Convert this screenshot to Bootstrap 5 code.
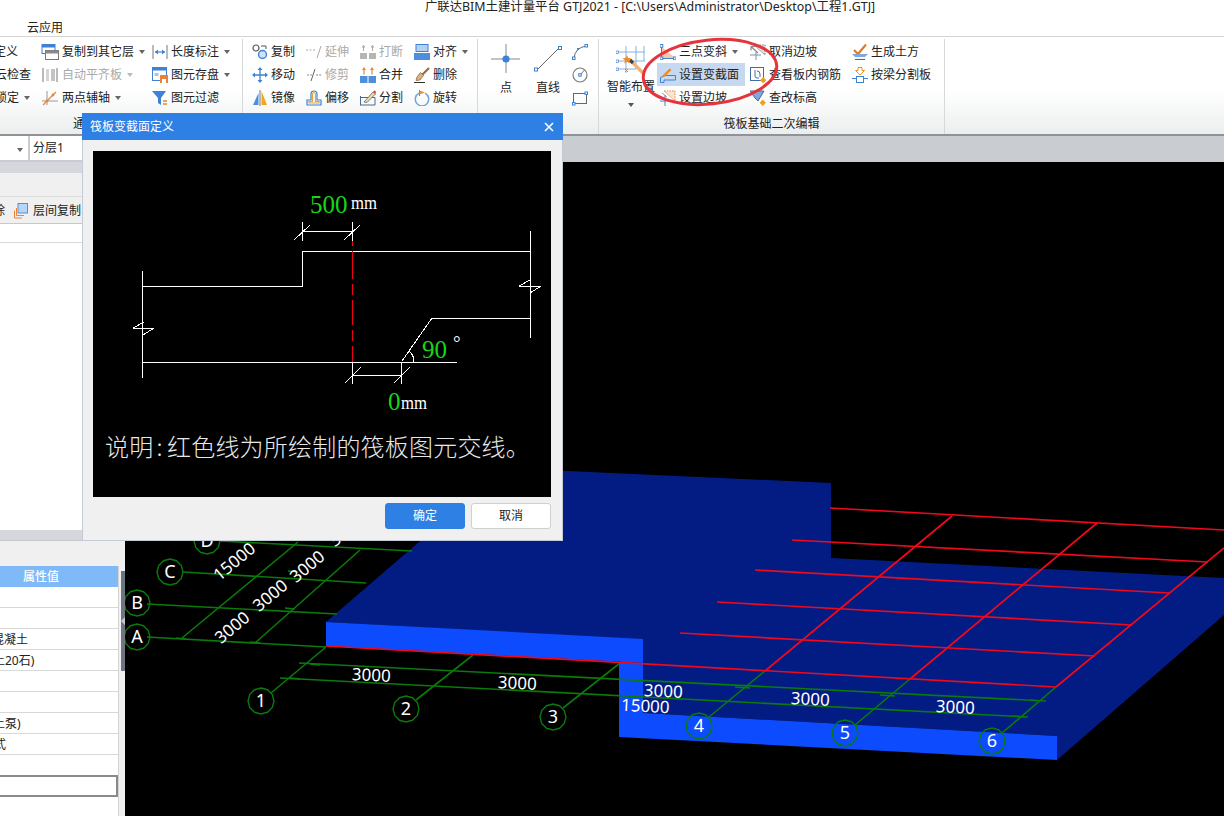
<!DOCTYPE html>
<html lang="zh-CN">
<head>
    <meta charset="UTF-8">
    <title>广联达BIM土建计量平台 GTJ2021</title>
    <link href="https://cdn.jsdelivr.net/npm/bootstrap@5.3.0/dist/css/bootstrap.min.css" rel="stylesheet">
    <style>
        html, body {
            width: 1224px;
            height: 816px;
            overflow: hidden;
        }
        body {
            position: relative;
            background: #fff;
            color: #222;
            font-family: "Noto Sans", "Noto Sans CJK SC", sans-serif;
            font-size: 12px;
        }
        .app-title {
            height: 17px;
            line-height: 13px;
            text-align: center;
            padding-left: 76px;
            font-size: 12.4px;
        }
        .app-tabs {
            height: 19px;
            padding-left: 27px;
            line-height: 22px;
        }

        /* ribbon */
        .rb {
            height: 100px;
            border-top: 1px solid #d4d4d4;
            border-bottom: 2px solid #8f9296;
            background: linear-gradient(#fff 55%, #eceeee);
        }
        .rb-group {
            flex: none;
            height: 95px;
            margin-top: 2px;
            border-right: 1px solid #d6d8da;
            padding-top: 1px;
        }
        .rb-g1 { width: 243px; }
        .rb-g2 { width: 235px; }
        .rb-g3 { width: 121px; }
        .rb-g4 { width: 346px; }
        .rb-body { height: 69px; }
        .rb-label {
            height: 27px;
            line-height: 29px;
            text-align: center;
        }
        .rb-g1 .rb-label { text-align: left; padding-left: 73px; }
        .rb-item {
            height: 23px;
            display: flex;
            align-items: center;
            white-space: nowrap;
        }
        .rb-item svg { flex: none; margin-right: 3px; }
        .rb-off { color: #a9a9a9; }
        .rb-on { background: #c6d9f0; margin-right: 5px; }
        .rb-caret {
            display: inline-block;
            margin-left: 5px;
            border-left: 3px solid transparent;
            border-right: 3px solid transparent;
            border-top: 4px solid #666;
        }
        .rb-off .rb-caret { border-top-color: #bbb; }
        .col-a { width: 41px; overflow: hidden; }
        .col-b { width: 111px; }
        .col-c { width: 90px; }
        .col-d { width: 54px; }
        .col-last { width: 63px; }
        .pad-g2 { padding-left: 9px; }
        .cut-a { margin-left: -6px; }
        .cut-b { margin-left: -5px; }
        .rb-big {
            width: 42px;
            text-align: center;
            line-height: 16px;
        }
        .rb-big svg { display: block; margin: 4px auto 6px; }
        .pad-g3 { padding-left: 7px; }
        .mini-col { padding-left: 3px; }
        .mini-col svg { margin: 0; }
        .pad-g4 { padding-left: 7px; }
        .smart { width: 50px; margin-right: 1px; }
        .smart svg { margin: 5px auto 4px; }
        .smart .rb-caret { margin: 6px 0 0; border-top-color: #555; }
        .col-e { width: 93px; }
        .col-e .rb-item { padding-left: 3px; }
        .col-f { width: 102px; }

        /* level bar */
        .level-bar {
            height: 26px;
            background: #c9ccd1;
        }
        .combo {
            height: 24px;
            background: #fff;
            line-height: 24px;
        }
        .combo-a { width: 28px; margin-right: 2px; padding: 0 4px 0 17px; }
        .combo-b { width: 60px; padding-left: 3px; }

        /* left side */
        .work { height: 654px; }
        .side {
            width: 125px;
            flex: none;
            background: #f0f0f0;
        }
        .side-head {
            height: 11px;
            background: #d5d7dc;
        }
        .side-gap { height: 24px; border-bottom: 1px solid #dcdcdc; }
        .side-tools {
            height: 27px;
            padding-top: 2px;
            border-bottom: 1px solid #c8c8c8;
            white-space: nowrap;
            overflow: hidden;
        }
        .side-tools svg { margin: 0 5px 0 9px; flex: none; }
        .cut-t { margin-left: -19px; }
        .side-list {
            height: 306px;
            background: #fff;
        }
        .side-list-row { height: 19px; border-bottom: 1px solid #d8d8d8; }
        .side-sep { height: 11px; background: #d5d7dc; border-bottom: 1px solid #c6c8cc; }
        .prop-top { height: 25px; }
        .prop-wrap { height: 250px; }
        .prop-list {
            width: 119px;
            background: #fff;
            border-right: 1px solid #d4d4d4;
        }
        .prop-head {
            height: 21px;
            line-height: 21px;
            padding-left: 23px;
            background: #7fb9f8;
            color: #fff;
            font-weight: 500;
        }
        .prop-row {
            height: 21px;
            line-height: 22px;
            border-bottom: 1px solid #d8d8d8;
            overflow: hidden;
            white-space: nowrap;
        }
        .prop-none { border-bottom: 0; height: 20px; }
        .prop-sel {
            height: 22px;
            border: 2px solid #8a8a8a;
            border-left: 0;
        }
        .cut-c { margin-left: -8px; }
        .cut-d { margin-left: -7px; }
        .cut-e { margin-left: -6px; }
        .side-grip {
            width: 6px;
            background: #f0f0f0;
            padding-left: 2px;
        }
        .grip-bar {
            width: 4px;
            height: 100px;
            margin-top: 5px;
            padding-top: 46px;
            background: #6c7580;
        }
        .grip-tip {
            display: block;
            width: 0;
            border-top: 4px solid transparent;
            border-bottom: 4px solid transparent;
            border-right: 4px solid #c4c8cc;
        }
        .scene {
            flex: 1;
            background: #000;
        }
        .scene svg, .draw-box svg { display: block; }
        .scene-line { fill: none; stroke: #0a7a0a; stroke-width: 1.6; }
        .scene-red { fill: none; stroke: #f0081c; stroke-width: 1.7; }
        .scene-txt {
            font-family: "Noto Sans", sans-serif;
            font-size: 17px;
            fill: #fff;
            text-anchor: middle;
        }
        .axis-txt { font-size: 18px; }

        /* dialog */
        .dlg {
            position: absolute;
            left: 82px;
            top: 113px;
            width: 481px;
            height: 428px;
            background: #f0f0f0;
            border: 1px solid #c4cbd6;
            border-top: 0;
        }
        .dlg-head {
            height: 27px;
            margin: 0 -1px;
            padding: 0 9px 0 8px;
            background: #2f80e4;
            color: #fff;
        }
        .dlg-close { width: 10px; height: 10px; }
        .draw-box {
            width: 458px;
            height: 346px;
            margin: 11px 0 6px 10px;
            background: #000;
        }
        .dlg-foot { padding-right: 11px; gap: 6px; }
        .dlg-btn {
            width: 80px;
            height: 26px;
            padding: 0;
            font-size: 12px;
            line-height: 24px;
            border-radius: 3px;
        }
        .dlg-ok, .dlg-ok:hover { background: #2f80e4; border-color: #2f80e4; color: #fff; }
        .dlg-no, .dlg-no:hover { background: #fff; border-color: #d0d0d0; color: #222; }
        .fig-line { fill: none; stroke: #fff; stroke-width: 1; shape-rendering: crispEdges; }
        .fig-red { fill: none; stroke: #f00010; stroke-width: 1; shape-rendering: crispEdges; }
        .fig-num { font-family: "Liberation Serif", serif; font-size: 25px; fill: #14d814; }
        .fig-unit { font-family: "Liberation Serif", serif; font-size: 19px; fill: #fff; }
        .fig-note {
            font-family: "Noto Sans CJK SC", sans-serif;
            font-size: 24px;
            font-weight: 300;
            letter-spacing: 0.2px;
            fill: #e8e8e8;
        }
        .mark-ring {
            position: absolute;
            left: 638px;
            top: 34px;
            pointer-events: none;
        }
    </style>
</head>
<body>

<!-- icon set -->
<svg width="0" height="0" class="position-absolute">
    <symbol id="i-cplayer" viewBox="0 0 18 16"><rect x="1" y="0.5" width="13" height="9" fill="#fff" stroke="#3d82d6"/><rect x="1" y="0.5" width="13" height="3" fill="#3d82d6"/><rect x="4.5" y="6.5" width="13" height="9" fill="#fff" stroke="#777"/><rect x="4.5" y="6.5" width="13" height="3" fill="#8a8a8a"/></symbol>
    <symbol id="i-autoflat" viewBox="0 0 18 16"><rect x="1" y="1" width="2" height="14" fill="#bbb"/><rect x="15" y="1" width="2" height="14" fill="#bbb"/><rect x="5" y="2" width="3" height="12" fill="#d5d5d5"/><rect x="10" y="2" width="4" height="12" fill="#c4c4c4"/></symbol>
    <symbol id="i-twoaxis" viewBox="0 0 18 16"><path d="M1 11H17M6 1V15" stroke="#999" fill="none"/><path d="M2 15 15 2" stroke="#e8833a" fill="none" stroke-width="1.3"/><circle cx="6" cy="11" r="1.4" fill="#e8833a"/><circle cx="12" cy="5" r="1.4" fill="#e8833a"/></symbol>
    <symbol id="i-length" viewBox="0 0 16 16"><path d="M1 1V15M15 1V15" stroke="#777" fill="none"/><path d="M3 8H13" stroke="#3d82d6" fill="none" stroke-width="1.2"/><path d="M3 8 6 5.5V10.5ZM13 8 10 5.5V10.5Z" fill="#3d82d6"/></symbol>
    <symbol id="i-store" viewBox="0 0 16 16"><rect x="0.5" y="0.5" width="14" height="13" fill="#fff" stroke="#3d82d6"/><rect x="0.5" y="0.5" width="14" height="3" fill="#3d82d6"/><rect x="2.5" y="6" width="4" height="3" fill="#a8c6ea"/><rect x="8" y="8" width="8" height="8" fill="#e8833a"/><rect x="10" y="12" width="4" height="4" fill="#fff"/></symbol>
    <symbol id="i-filter" viewBox="0 0 16 16"><path d="M0 1H14L9 8V15L6 13V8Z" fill="#3d82d6"/><path d="M11 11H15M11 14H15" stroke="#e8833a" stroke-width="1.4"/></symbol>
    <symbol id="i-copy" viewBox="0 0 16 16"><circle cx="4" cy="4" r="3" fill="#fff" stroke="#555" stroke-width="1.2"/><circle cx="10.5" cy="10.5" r="4" fill="#cfe2f7" stroke="#3d82d6" stroke-width="1.4"/><path d="M9 2H14V5" fill="none" stroke="#555"/></symbol>
    <symbol id="i-extend" viewBox="0 0 16 16"><path d="M0 6H10" stroke="#aaa" stroke-dasharray="2 1.5"/><path d="M11 14 15 2" stroke="#aaa"/></symbol>
    <symbol id="i-break" viewBox="0 0 16 16"><rect x="0" y="9" width="7" height="6" fill="#b5b5b5"/><rect x="9" y="9" width="7" height="6" fill="#b5b5b5"/><path d="M3.5 7V1M12.5 7V1" stroke="#aaa"/><path d="M1.5 3.5 3.5 1 5.5 3.5ZM10.5 3.5 12.5 1 14.5 3.5Z" fill="#aaa"/></symbol>
    <symbol id="i-align" viewBox="0 0 16 16"><rect x="2" y="0.5" width="12" height="7" fill="#b6d1f0" stroke="#3d82d6"/><rect x="0" y="9" width="16" height="7" fill="#4d8fdd"/></symbol>
    <symbol id="i-move" viewBox="0 0 16 16"><path d="M8 2V14M2 8H14" stroke="#3d82d6" stroke-width="1.3"/><path d="M8 0 10.5 3H5.5ZM8 16 10.5 13H5.5ZM0 8 3 5.5V10.5ZM16 8 13 5.5V10.5Z" fill="#3d82d6"/></symbol>
    <symbol id="i-trim" viewBox="0 0 16 16"><path d="M1 8H6M10 8H16" stroke="#888" stroke-dasharray="2 1.2"/><path d="M5 14 9 2" stroke="#666"/></symbol>
    <symbol id="i-merge" viewBox="0 0 16 16"><rect x="0" y="9" width="16" height="7" fill="#4d8fdd"/><path d="M8 9V16" stroke="#fff"/><path d="M4 7.5V2M12 7.5V2" stroke="#e8833a" stroke-width="1.2"/><path d="M4 0 6 3H2ZM12 0 14 3H10Z" fill="#e8833a"/></symbol>
    <symbol id="i-del" viewBox="0 0 16 16"><path d="M15 1 8 8" stroke="#9c6a36" stroke-width="2.2"/><path d="M9.5 8.5 6.5 5.5 3 10 2 13.5 6 13Z" fill="#e0b27c" stroke="#7b5a38" stroke-width="0.7"/><path d="M0 15.5H11" stroke="#333"/></symbol>
    <symbol id="i-mirror" viewBox="0 0 16 16"><path d="M6.5 3V15H1Z" fill="#4d8fdd"/><path d="M9.5 1V15H15Z" fill="#f2a71b"/><path d="M8 0V16" stroke="#777"/></symbol>
    <symbol id="i-offset" viewBox="0 0 16 16"><path d="M1 15V10H5V4Q5 1 8 1T11 4V10H15V15Z" fill="none" stroke="#3d82d6" stroke-width="1.2"/><path d="M3 13V11.5H6.5V4.5Q6.5 2.5 8 2.5T9.5 4.5V11.5H13V13Z" fill="none" stroke="#e8a43a" stroke-width="1.2"/></symbol>
    <symbol id="i-split" viewBox="0 0 16 16"><path d="M0.5 7.5H15V15H0.5Z" fill="none" stroke="#4a6a94"/><path d="M0.5 15.5V6" stroke="#4a6a94"/><path d="M4 12 13 2 15.5 4 7 12.5Z" fill="#e8d9b0" stroke="#555" stroke-width="0.7"/><path d="M13 2 15.5 4 16 1.5 14.5 0.5Z" fill="#d9483b"/></symbol>
    <symbol id="i-rotate" viewBox="0 0 16 16"><path d="M5 3.2A6.7 6.7 0 1 0 11 3.2" fill="none" stroke="#6da5e6" stroke-width="1.5"/><path d="M5.5 0V6" stroke="#888"/><path d="M5.5 0.5 11 2.5 5.5 4.5Z" fill="#f08c24"/></symbol>
    <symbol id="i-point" viewBox="0 0 30 30"><path d="M15 0V29M0 15H29" stroke="#888"/><circle cx="15" cy="15" r="3.6" fill="#3d82d6"/></symbol>
    <symbol id="i-line" viewBox="0 0 30 30"><path d="M4 26 26 4" stroke="#666"/><rect x="1.5" y="24" width="3" height="3" fill="#fff" stroke="#3d82d6"/><rect x="25.5" y="2.5" width="3" height="3" fill="#fff" stroke="#3d82d6"/></symbol>
    <symbol id="i-arc" viewBox="0 0 16 16"><path d="M2 14Q3 4 14 2" fill="none" stroke="#666"/><rect x="0.5" y="13" width="2.5" height="2.5" fill="#fff" stroke="#3d82d6"/><rect x="13" y="0.5" width="2.5" height="2.5" fill="#fff" stroke="#3d82d6"/><rect x="5" y="4" width="2" height="2" fill="#3d82d6"/></symbol>
    <symbol id="i-circle" viewBox="0 0 16 16"><circle cx="8" cy="8" r="7" fill="none" stroke="#777" stroke-width="1.1"/><rect x="6.8" y="6.8" width="2.4" height="2.4" fill="#fff" stroke="#3d82d6"/><path d="M9 7 12.5 3" stroke="#777"/></symbol>
    <symbol id="i-rect" viewBox="0 0 16 16"><rect x="1.5" y="3.5" width="13" height="10" fill="none" stroke="#666"/><rect x="0.5" y="12.5" width="2.5" height="2.5" fill="#fff" stroke="#3d82d6"/><rect x="13" y="2" width="2.5" height="2.5" fill="#fff" stroke="#3d82d6"/></symbol>
    <symbol id="i-smart" viewBox="0 0 30 30"><path d="M0.5 7H29M0.5 16H29M0.5 24H20M10 1V28M20 1V24M28 1V16" stroke="#7aa8e0" fill="none" stroke-width="0.9"/><rect x="0" y="6" width="2.4" height="2.4" fill="#fff" stroke="#3d82d6" stroke-width="0.7"/><rect x="0" y="15" width="2.4" height="2.4" fill="#fff" stroke="#3d82d6" stroke-width="0.7"/><rect x="0" y="23" width="2.4" height="2.4" fill="#fff" stroke="#3d82d6" stroke-width="0.7"/><path d="M14 15 27 28" stroke="#eeb27c" stroke-width="3.2"/><path d="M14 15 17 18" stroke="#444" stroke-width="3.2"/><path d="M11 10 12.2 13 15.5 13.2 13 15.3 13.8 18.5 11 16.8 8.2 18.5 9 15.3 6.5 13.2 9.8 13Z" fill="#f08c24"/><path d="M9 24 12 27M12 24 9 27" stroke="#e8833a"/></symbol>
    <symbol id="i-three" viewBox="0 0 16 16"><path d="M2 14H15L2 3Z" fill="#f5c7a8"/><path d="M1.5 14.5H15M1.5 14.5V2" stroke="#3d82d6" fill="none"/><rect x="0" y="0.5" width="2.8" height="2.8" fill="#fff" stroke="#3d82d6"/><rect x="0" y="13" width="2.8" height="2.8" fill="#fff" stroke="#3d82d6"/><rect x="13.5" y="13" width="2.5" height="2.8" fill="#fff" stroke="#3d82d6"/></symbol>
    <symbol id="i-setvar" viewBox="0 0 16 16"><path d="M0.5 15.5V10.5L4 8.5H15.5V13H4V15.5Z" fill="none" stroke="#3d82d6"/><path d="M3 8 9.5 1.5 11.5 3 5 9.5 2.5 10.5Z" fill="#f08c24"/></symbol>
    <symbol id="i-setslope" viewBox="0 0 16 16"><path d="M4 1H15V11Z" fill="#fbe6d6" stroke="#e8833a" stroke-dasharray="1.5 1.2"/><path d="M0 11H12M5 5V16" stroke="#3d82d6" fill="none"/><path d="M2 3 7 7" stroke="#999"/></symbol>
    <symbol id="i-noslope" viewBox="0 0 16 16"><path d="M4 1H15V11Z" fill="#e4e4e4" stroke="#777" stroke-dasharray="1.5 1.2"/><path d="M8 9 1 2.5M1 2.5H5M1 2.5V6.5" stroke="#8a8a8a" fill="none" stroke-width="1.2"/><path d="M0 11H11M6 8V16" stroke="#7c8ea6" fill="none"/></symbol>
    <symbol id="i-rebar" viewBox="0 0 16 16"><rect x="0.5" y="0.5" width="13" height="13" fill="#fff" stroke="#3d6ea8"/><path d="M5 3V9Q5 11 7 11H9M7 4Q10 4 10 7V10" stroke="#3d6ea8" fill="none"/><rect x="11" y="11" width="4.5" height="4.5" fill="#f0a020" transform="rotate(45 13.25 13.25)"/></symbol>
    <symbol id="i-height" viewBox="0 0 16 16"><path d="M0 1H14L8 11 5 8Z" fill="#7fa9dc" stroke="#3d6ea8"/><rect x="10.5" y="10.5" width="4.5" height="4.5" fill="#f0a020" transform="rotate(45 12.75 12.75)"/></symbol>
    <symbol id="i-earth" viewBox="0 0 16 16"><path d="M2 6 6 10 14 0.5" fill="none" stroke="#e8781e" stroke-width="2.2"/><path d="M0 10H16L13 13H3Z" fill="#7fa9dc"/><path d="M3 15.5H13" stroke="#3d6ea8" stroke-width="1.2"/></symbol>
    <symbol id="i-splitb" viewBox="0 0 16 16"><rect x="4.5" y="9.5" width="7" height="6" fill="#fff" stroke="#3d82d6"/><path d="M0 11.5H4M12 11.5H16" stroke="#3d82d6"/><path d="M6 0.5H10V3.5H12.5L8 8 3.5 3.5H6Z" fill="#fff" stroke="#f08c24"/></symbol>
    <symbol id="i-layercopy" viewBox="0 0 14 16"><rect x="4" y="0.5" width="9.5" height="9.5" fill="#b6d6f8" stroke="#5a8fd0"/><path d="M2.5 5V12.5H10M0.5 7.5V15H8" fill="none" stroke="#e8833a"/></symbol>
</svg>

<div class="app-title">广联达BIM土建计量平台 GTJ2021 - [C:\Users\Administrator\Desktop\工程1.GTJ]</div>
<div class="app-tabs">云应用</div>

<!-- ribbon -->
<div class="rb d-flex">
    <div class="rb-group rb-g1">
        <div class="rb-body d-flex">
            <div class="col-a">
                <div class="rb-item"><span class="cut-a">定义</span></div>
                <div class="rb-item"><span class="cut-b">云检查</span></div>
                <div class="rb-item"><span class="cut-b">锁定</span><span class="rb-caret"></span></div>
            </div>
            <div class="col-b">
                <div class="rb-item"><svg width="18" height="16"><use href="#i-cplayer"/></svg>复制到其它层<span class="rb-caret"></span></div>
                <div class="rb-item rb-off"><svg width="18" height="16"><use href="#i-autoflat"/></svg>自动平齐板<span class="rb-caret"></span></div>
                <div class="rb-item"><svg width="18" height="16"><use href="#i-twoaxis"/></svg>两点辅轴<span class="rb-caret"></span></div>
            </div>
            <div class="col-c">
                <div class="rb-item"><svg width="16" height="16"><use href="#i-length"/></svg>长度标注<span class="rb-caret"></span></div>
                <div class="rb-item"><svg width="16" height="16"><use href="#i-store"/></svg>图元存盘<span class="rb-caret"></span></div>
                <div class="rb-item"><svg width="16" height="16"><use href="#i-filter"/></svg>图元过滤</div>
            </div>
        </div>
        <div class="rb-label">通</div>
    </div>
    <div class="rb-group rb-g2">
        <div class="rb-body d-flex pad-g2">
            <div class="col-d">
                <div class="rb-item"><svg width="16" height="16"><use href="#i-copy"/></svg>复制</div>
                <div class="rb-item"><svg width="16" height="16"><use href="#i-move"/></svg>移动</div>
                <div class="rb-item"><svg width="16" height="16"><use href="#i-mirror"/></svg>镜像</div>
            </div>
            <div class="col-d">
                <div class="rb-item rb-off"><svg width="16" height="16"><use href="#i-extend"/></svg>延伸</div>
                <div class="rb-item rb-off"><svg width="16" height="16"><use href="#i-trim"/></svg>修剪</div>
                <div class="rb-item"><svg width="16" height="16"><use href="#i-offset"/></svg>偏移</div>
            </div>
            <div class="col-d">
                <div class="rb-item rb-off"><svg width="16" height="16"><use href="#i-break"/></svg>打断</div>
                <div class="rb-item"><svg width="16" height="16"><use href="#i-merge"/></svg>合并</div>
                <div class="rb-item"><svg width="16" height="16"><use href="#i-split"/></svg>分割</div>
            </div>
            <div class="col-last">
                <div class="rb-item"><svg width="16" height="16"><use href="#i-align"/></svg>对齐<span class="rb-caret"></span></div>
                <div class="rb-item"><svg width="16" height="16"><use href="#i-del"/></svg>删除</div>
                <div class="rb-item"><svg width="16" height="16"><use href="#i-rotate"/></svg>旋转</div>
            </div>
        </div>
    </div>
    <div class="rb-group rb-g3">
        <div class="rb-body d-flex pad-g3">
            <div class="rb-big"><svg width="30" height="30"><use href="#i-point"/></svg>点</div>
            <div class="rb-big"><svg width="30" height="30"><use href="#i-line"/></svg>直线</div>
            <div class="mini-col">
                <div class="rb-item"><svg width="16" height="16"><use href="#i-arc"/></svg></div>
                <div class="rb-item"><svg width="16" height="16"><use href="#i-circle"/></svg></div>
                <div class="rb-item"><svg width="16" height="16"><use href="#i-rect"/></svg></div>
            </div>
        </div>
    </div>
    <div class="rb-group rb-g4">
        <div class="rb-body d-flex pad-g4">
            <div class="rb-big smart"><svg width="30" height="30"><use href="#i-smart"/></svg>智能布置<br><span class="rb-caret"></span></div>
            <div class="col-e">
                <div class="rb-item"><svg width="16" height="16"><use href="#i-three"/></svg>三点变斜<span class="rb-caret"></span></div>
                <div class="rb-item rb-on"><svg width="16" height="16"><use href="#i-setvar"/></svg>设置变截面</div>
                <div class="rb-item"><svg width="16" height="16"><use href="#i-setslope"/></svg>设置边坡</div>
            </div>
            <div class="col-f">
                <div class="rb-item"><svg width="16" height="16"><use href="#i-noslope"/></svg>取消边坡</div>
                <div class="rb-item"><svg width="16" height="16"><use href="#i-rebar"/></svg>查看板内钢筋</div>
                <div class="rb-item"><svg width="16" height="16"><use href="#i-height"/></svg>查改标高</div>
            </div>
            <div>
                <div class="rb-item"><svg width="16" height="16"><use href="#i-earth"/></svg>生成土方</div>
                <div class="rb-item"><svg width="16" height="16"><use href="#i-splitb"/></svg>按梁分割板</div>
            </div>
        </div>
        <div class="rb-label">筏板基础二次编辑</div>
    </div>
</div>

<!-- floor selectors -->
<div class="level-bar d-flex">
    <div class="combo combo-a"><span class="rb-caret m-0"></span></div>
    <div class="combo combo-b">分层1</div>
</div>

<div class="work d-flex">
    <div class="side">
        <div class="side-head"></div>
        <div class="side-gap"></div>
        <div class="side-tools d-flex align-items-center">
            <span class="cut-t">删除</span>
            <svg width="14" height="16"><use href="#i-layercopy"/></svg>层间复制
        </div>
        <div class="side-list"><div class="side-list-row"></div></div>
        <div class="side-sep"></div>
        <div class="prop-top"></div>
        <div class="prop-wrap d-flex">
            <div class="prop-list">
                <div class="prop-head">属性值</div>
                <div class="prop-row"></div>
                <div class="prop-row"></div>
                <div class="prop-row"><span class="cut-c d-inline-block">混凝土</span></div>
                <div class="prop-row"><span class="cut-d d-inline-block">土20石)</span></div>
                <div class="prop-row"></div>
                <div class="prop-row"></div>
                <div class="prop-row"><span class="cut-d d-inline-block">土泵)</span></div>
                <div class="prop-row"><span class="cut-e d-inline-block">式</span></div>
                <div class="prop-row prop-none"></div>
                <div class="prop-row prop-sel"></div>
            </div>
            <div class="side-grip"><div class="grip-bar"><span class="grip-tip"></span></div></div>
        </div>
    </div>

    <!-- 3D view, coordinates are page pixels -->
    <div class="scene">
        <svg width="1099" height="654" viewBox="125 162 1099 654">
            <defs>
                <polygon id="axis-ring" points="0,-13 6.5,-11.3 11.3,-6.5 13,0 11.3,6.5 6.5,11.3 0,13 -6.5,11.3 -11.3,6.5 -13,0 -11.3,-6.5 -6.5,-11.3" fill="none" stroke="#0a7a0a" stroke-width="1.4"/>
            </defs>
            <polygon fill="#021c84" points="326,622 505,468 831,483 831,558 1224,578 1224,615 1057,760 1057,736 643,713 643,640"/>
            <polygon fill="#0d4bff" points="326,622 643,639 643,663 326,646"/>
            <polygon fill="#0d4bff" points="619,662 643,663 643,713 1057,736 1057,760 619,737"/>

            <path class="scene-line" d="M147,637 326,647M147,604 337,614M183,572 366,583M220,541 412,551"/>
            <path class="scene-line" d="M182,638 298,542M255,643 360,550"/>
            <path class="scene-line" d="M271,693 326,647M416,700 473,655M563,708 620,663M709,717 765,671M855,725 910,679M1002,733 1056,687"/>
            <path class="scene-line" d="M299,663 1046,701M280,678 1028,717"/>
            <path class="scene-line" stroke-width="2.5" d="M176,638 186,639M250,642 260,643M288,571 298,572M285,608 295,609M310,664 320,665M290,678 300,679M735,687 750,688M880,695 895,696M1030,700 1040,701M1012,716 1025,717"/>

            <path class="scene-red" d="M326,646 1056,687M680,633 1095,656M717,602 1132,625M755,570 1169,593M792,540 1208,562M830,508 1224,530"/>
            <path class="scene-red" d="M765,671 952,516M910,679 1097,523M1056,687 1224,548"/>

            <g class="scene-txt">
                <text transform="translate(236 632) rotate(-40)">3000</text>
                <text transform="translate(274 600) rotate(-40)">3000</text>
                <text transform="translate(311 571) rotate(-40)">3000</text>
                <text transform="translate(238 566) rotate(-40)">15000</text>
                <text transform="translate(350 535) rotate(-40)">3000</text>
                <text transform="translate(371 681) rotate(3)">3000</text>
                <text transform="translate(517 689) rotate(3)">3000</text>
                <text transform="translate(663 697) rotate(3)">3000</text>
                <text transform="translate(810 705) rotate(3)">3000</text>
                <text transform="translate(955 713) rotate(3)">3000</text>
                <text transform="translate(645 712) rotate(3)">15000</text>
            </g>
            <g class="scene-txt axis-txt">
                <use href="#axis-ring" x="137" y="637"/><text x="137" y="643">A</text>
                <use href="#axis-ring" x="137" y="603"/><text x="137" y="609">B</text>
                <use href="#axis-ring" x="170" y="572"/><text x="170" y="578">C</text>
                <use href="#axis-ring" x="207" y="541"/><text x="207" y="547">D</text>
                <use href="#axis-ring" x="261" y="701"/><text x="261" y="707">1</text>
                <use href="#axis-ring" x="406" y="709"/><text x="406" y="715">2</text>
                <use href="#axis-ring" x="553" y="717"/><text x="553" y="723">3</text>
                <use href="#axis-ring" x="699" y="726"/><text x="699" y="732">4</text>
                <use href="#axis-ring" x="845" y="733"/><text x="845" y="739">5</text>
                <use href="#axis-ring" x="992" y="741"/><text x="992" y="747">6</text>
            </g>
        </svg>
    </div>
</div>

<!-- ring drawn over the ribbon -->
<svg class="mark-ring" width="146" height="76" viewBox="638 34 146 76">
    <ellipse cx="710" cy="72" rx="67" ry="32" transform="rotate(-6 710 72)" fill="none" stroke="#e6343c" stroke-width="3"/>
</svg>

<!-- dialog -->
<div class="dlg">
    <div class="dlg-head d-flex align-items-center justify-content-between">
        <span>筏板变截面定义</span>
        <svg class="dlg-close" viewBox="0 0 10 10"><path d="M1 1 9 9M9 1 1 9" stroke="#fff" stroke-width="1.6"/></svg>
    </div>
    <div class="draw-box">
        <!-- coordinates are page pixels -->
        <svg width="458" height="346" viewBox="93 151 458 346">
            <path class="fig-line" d="M142,271V378M142,286H302V251H530M530,231V338M530,318H432L402,361M142,362H457"/>
            <path class="fig-line" d="M302,222V241M352,222V241M302,231H352M294,240 310,225M344,240 360,225"/>
            <path class="fig-line" d="M352,362V384M401,362V384M352,375H401M345,383 361,367M394,383 410,367"/>
            <path class="fig-line" d="M519,286H541M519,286 530,280M541,286 530,293M133,328H154M133,328 144,322M154,328 143,335"/>
            <path class="fig-line" d="M409,351Q414,355 414,362"/>
            <path class="fig-red" d="M352,241V362" stroke-dasharray="5 5 28 5 11 5 25 5 11 5 28"/>
            <text class="fig-num" x="310" y="213">500</text>
            <text class="fig-unit" x="351" y="209" textLength="26" lengthAdjust="spacingAndGlyphs">mm</text>
            <text class="fig-num" x="422" y="358">90</text>
            <text class="fig-unit" x="453" y="349">°</text>
            <text class="fig-num" x="388" y="410">0</text>
            <text class="fig-unit" x="401" y="409" textLength="26" lengthAdjust="spacingAndGlyphs">mm</text>
            <text class="fig-note" x="105" y="456">说明<tspan dx="3">:</tspan><tspan x="167">红色线为所绘制的筏板图元交线。</tspan></text>
        </svg>
    </div>
    <div class="dlg-foot d-flex justify-content-end">
        <button type="button" class="btn dlg-btn dlg-ok">确定</button>
        <button type="button" class="btn dlg-btn dlg-no">取消</button>
    </div>
</div>

</body>
</html>
